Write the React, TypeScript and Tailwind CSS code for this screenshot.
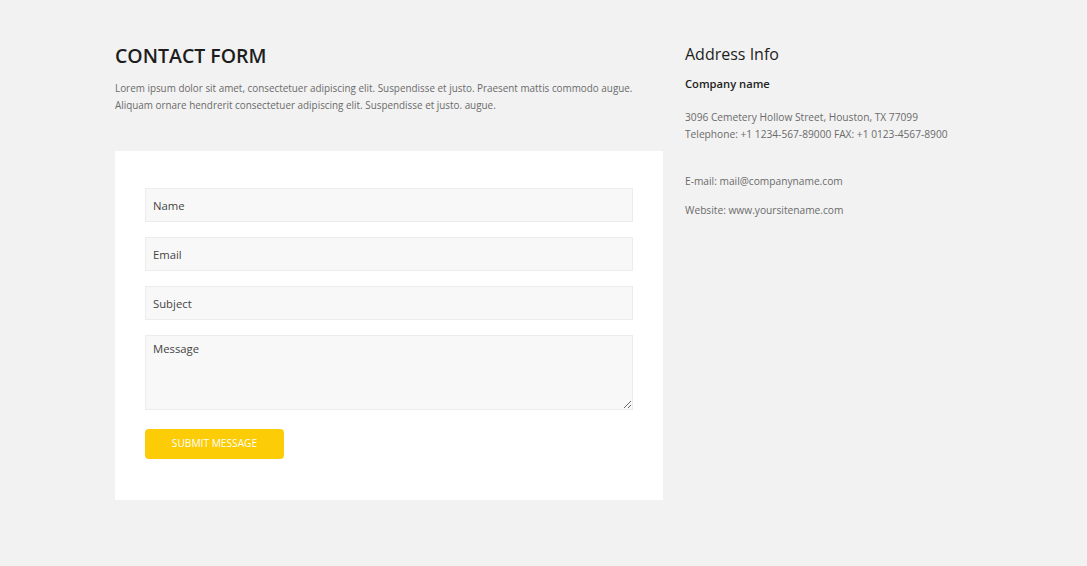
export default function App() {
  return (
    <div className="min-h-[566px] w-full bg-[#f2f2f2] font-['Open_Sans',sans-serif] text-[#222]">
      <div className="flex gap-[22px] pl-[115px] pt-[43px]">
        {/* Contact form column */}
        <div className="w-[548px]">
          <h2 className="text-[19.5px] font-semibold leading-[26px] text-[#1d1d1d]">CONTACT FORM</h2>
          <p className="mt-[11px] whitespace-nowrap text-[9.9px] leading-[17px] text-[#6b6b6b]">
            Lorem ipsum dolor sit amet, consectetuer adipiscing elit. Suspendisse et justo. Praesent mattis commodo augue.
            <br />
            Aliquam ornare hendrerit consectetuer adipiscing elit. Suspendisse et justo. augue.
          </p>

          <form className="mt-[37px] bg-white px-[30px] pb-[41px] pt-[37px]" onSubmit={(e) => e.preventDefault()}>
            <div className="flex flex-col gap-[15px]">
              {["Name", "Email", "Subject"].map((p) => (
                <input
                  key={p}
                  placeholder={p}
                  className="h-[34px] w-full border border-[#ececec] bg-[#f8f8f8] px-[7px] text-[11.3px] text-[#444] outline-none placeholder:text-[#444]"
                />
              ))}
              <textarea
                placeholder="Message"
                className="block h-[75px] w-full border border-[#ececec] bg-[#f8f8f8] px-[7px] pt-[5px] text-[11.3px] text-[#444] outline-none placeholder:text-[#444]"
              />
            </div>
            <button
              type="submit"
              className="mt-[19px] h-[30px] w-[139px] rounded-[4px] bg-[#fccc06] text-[10.2px] text-white"
            >
              SUBMIT MESSAGE
            </button>
          </form>
        </div>

        {/* Address column */}
        <div className="w-[320px]">
          <h3 className="text-[16px] leading-[22px] text-[#1d1d1d]">Address Info</h3>
          <p className="mt-[11px] text-[11.2px] font-semibold text-[#222]">Company name</p>
          <div className="mt-[16px] text-[10.2px] leading-[17px] text-[#6b6b6b]">
            <p>3096 Cemetery Hollow Street, Houston, TX 77099</p>
            <p>Telephone: +1 1234-567-89000 FAX: +1 0123-4567-8900</p>
          </div>
          <p className="mt-[30px] text-[10.2px] leading-[17px] text-[#6b6b6b]">E-mail: mail@companyname.com</p>
          <p className="mt-[12px] text-[10.2px] leading-[17px] text-[#6b6b6b]">Website: www.yoursitename.com</p>
        </div>
      </div>
    </div>
  );
}
